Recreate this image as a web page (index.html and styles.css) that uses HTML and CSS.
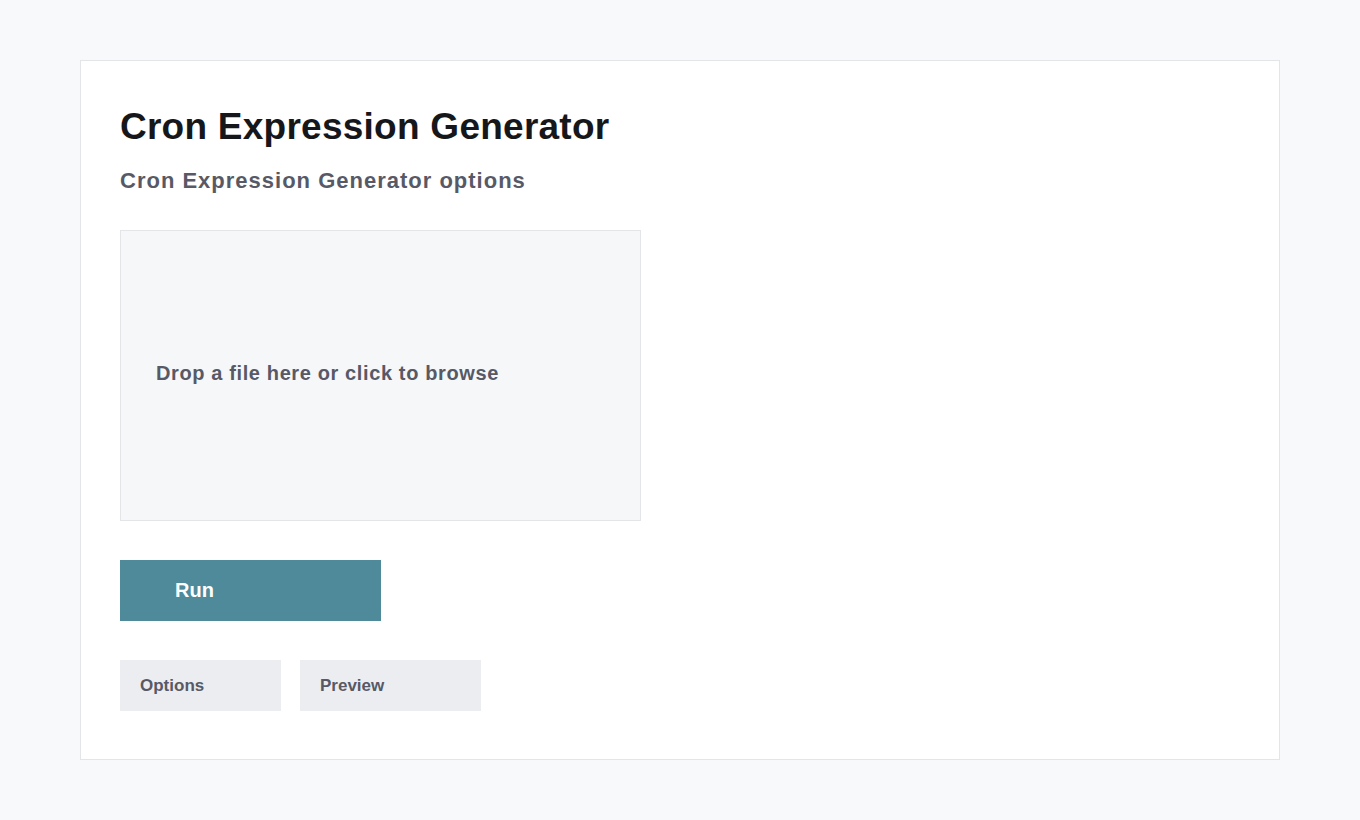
FILE: index.html
```html
<!DOCTYPE html>
<html>
<head>
<meta charset="utf-8">
<title>Cron Expression Generator</title>
<link rel="stylesheet" href="styles.css">
</head>
<body>
<main class="card">
  <h1 class="title">Cron Expression Generator</h1>
  <h2 class="subtitle">Cron Expression Generator options</h2>
  <div class="dropzone">Drop a file here or click to browse</div>
  <button class="run">Run</button>
  <div class="tabs">
    <div class="tab tab-options">Options</div>
    <div class="tab tab-preview">Preview</div>
  </div>
</main>
</body>
</html>
```

FILE: styles.css
```css
html, body {
  margin: 0;
  padding: 0;
}
body {
  background: #f8f9fb;
  font-family: "Liberation Sans", Arial, sans-serif;
  padding: 60px 80px;
  height: 820px;
  box-sizing: border-box;
}
.card {
  background: #ffffff;
  border: 1px solid #e3e5e9;
  height: 700px;
  box-sizing: border-box;
  padding: 39px 39px;
  display: flex;
  flex-direction: column;
  align-items: flex-start;
}
.title {
  margin: 0;
  font-size: 37px;
  line-height: 54px;
  font-weight: 700;
  letter-spacing: 0.25px;
  color: #16171a;
}
.subtitle {
  margin: 0;
  margin-top: 11px;
  font-size: 22px;
  line-height: 32px;
  font-weight: 700;
  letter-spacing: 1px;
  color: #575a66;
}
.dropzone {
  margin-top: 33px;
  width: 521px;
  height: 291px;
  box-sizing: border-box;
  background: #f6f7f8;
  border: 1px solid #e3e5e8;
  display: flex;
  align-items: center;
  padding-left: 35px;
  padding-bottom: 4px;
  font-size: 20px;
  font-weight: 700;
  letter-spacing: 0.62px;
  color: #575a66;
}
.run {
  margin-top: 39px;
  width: 261px;
  height: 61px;
  border: none;
  background: #4e8a9a;
  color: #ffffff;
  font-family: inherit;
  font-size: 20px;
  font-weight: 700;
  text-align: left;
  padding: 0 0 0 55px;
}
.tabs {
  margin-top: 39px;
  display: flex;
  gap: 19px;
}
.tab {
  height: 51px;
  box-sizing: border-box;
  background: #ecedf1;
  display: flex;
  align-items: center;
  padding-left: 20px;
  font-size: 17px;
  font-weight: 700;
  color: #575a66;
}
.tab-options { width: 161px; }
.tab-preview { width: 181px; }
```
